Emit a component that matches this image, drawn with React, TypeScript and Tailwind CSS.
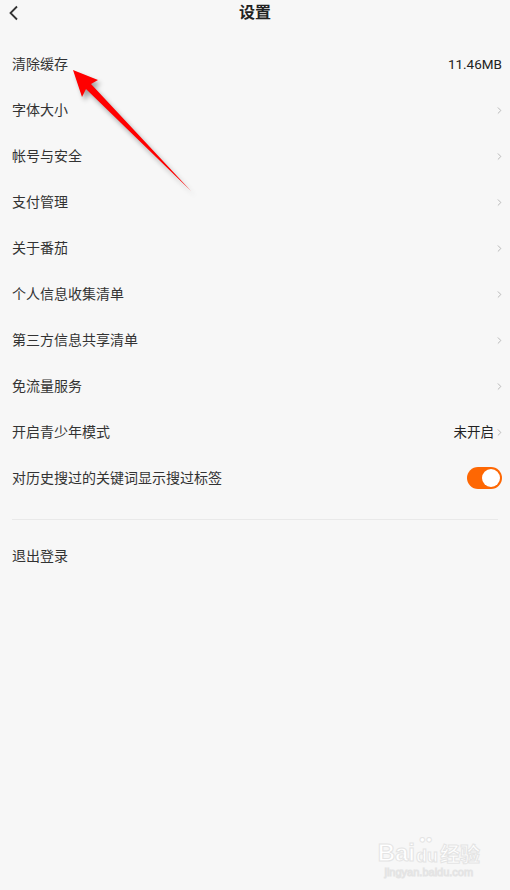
import { ChevronRight } from 'lucide-react'

const rows: { label: string; value?: string; chevron?: boolean; toggle?: boolean }[] = [
  { label: '清除缓存', value: '11.46MB' },
  { label: '字体大小', chevron: true },
  { label: '帐号与安全', chevron: true },
  { label: '支付管理', chevron: true },
  { label: '关于番茄', chevron: true },
  { label: '个人信息收集清单', chevron: true },
  { label: '第三方信息共享清单', chevron: true },
  { label: '免流量服务', chevron: true },
  { label: '开启青少年模式', value: '未开启', chevron: true },
  { label: '对历史搜过的关键词显示搜过标签', toggle: true },
]

function Toggle() {
  return (
    <div className="flex h-[22px] w-[35px] items-center justify-end rounded-full bg-[#fe6703] pr-[2px]">
      <div className="h-[18px] w-[18px] rounded-full bg-white" />
    </div>
  )
}

function Arrow() {
  return (
    <svg className="pointer-events-none absolute left-0 top-0" width="220" height="210" viewBox="0 0 220 210">
      <defs>
        <filter id="sh" x="-20%" y="-20%" width="140%" height="140%">
          <feGaussianBlur stdDeviation="2.5" />
        </filter>
      </defs>
      <polygon
        points="73,70 98,80 91,84 193,193 86,89 82,97"
        fill="#000"
        opacity="0.35"
        transform="translate(3,4)"
        filter="url(#sh)"
      />
      <polygon points="73,70 98,80 91,84 191,191 86,89 82,97" fill="#ff0000" />
    </svg>
  )
}

export default function App() {
  return (
    <div className="relative h-[890px] w-[510px] overflow-hidden bg-[#f7f7f7] font-['Roboto','Noto_Sans_CJK_SC',sans-serif] text-[#333]">
      <div className="relative flex h-[26px] items-center justify-center">
        <svg className="absolute left-[8px] top-[5px]" width="12" height="16" viewBox="0 0 12 16">
          <polyline points="9,1.5 2.5,8 9,14.5" fill="none" stroke="#333" strokeWidth="1.8" />
        </svg>
        <span className="text-[16px] font-bold text-[#222]">设置</span>
      </div>

      <div className="pt-[15px]">
        {rows.map((r) => (
          <div key={r.label} className="flex h-[46px] items-center justify-between pl-[12px] pr-[8px]">
            <span className="text-[14px]">{r.label}</span>
            <div className="flex items-center">
              {r.value && <span className="text-[13.5px] text-[#222]">{r.value}</span>}
              {r.chevron && <ChevronRight className="-mr-[3px] text-[#b3b3b3]" size={11} strokeWidth={2} />}
              {r.toggle && <Toggle />}
            </div>
          </div>
        ))}
      </div>

      <div className="mx-[12px] mt-[18px] h-px bg-[#e9e9e9]" />

      <div className="mt-[13px] flex h-[46px] items-center pl-[12px]">
        <span className="text-[14px]">退出登录</span>
      </div>

      <Arrow />

      <div className="absolute bottom-[12px] right-[30px] flex flex-col items-center text-white [-webkit-text-stroke:1px_#e4e4e4]">
        <div className="flex items-end font-['Liberation_Sans','Noto_Sans_CJK_SC',sans-serif] text-[24px] font-bold leading-none">
          <span>Bai</span>
          <span className="relative ml-[1px] text-[18px]">
            <span className="absolute -top-[13px] left-[3px] text-[11px]">●●</span>
            du
          </span>
          <span className="ml-[2px] text-[20px]">经验</span>
        </div>
        <span className="mt-[2px] font-['Liberation_Sans',sans-serif] text-[11px] leading-none">jingyan.baidu.com</span>
      </div>
    </div>
  )
}
